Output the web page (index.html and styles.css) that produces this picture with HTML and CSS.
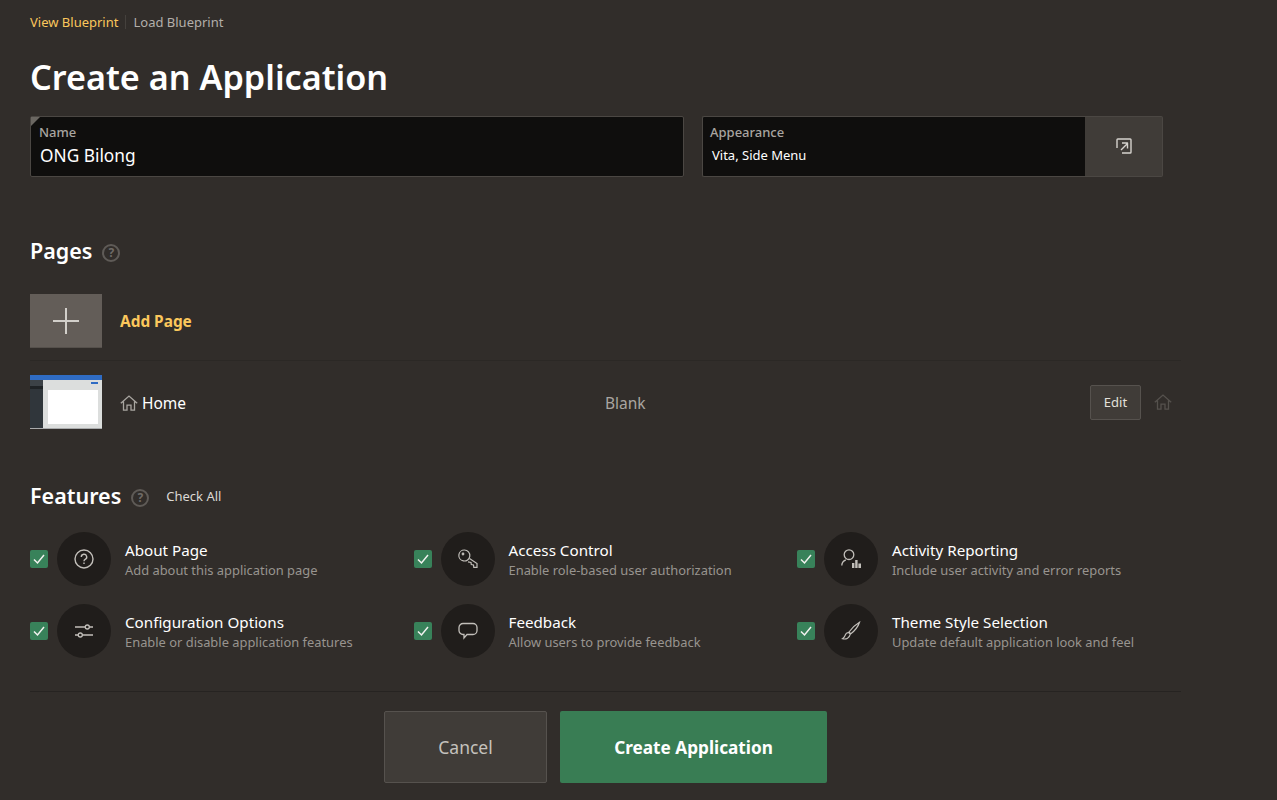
FILE: index.html
```html
<!DOCTYPE html>
<html lang="en">
<head>
<meta charset="utf-8">
<title>Create an Application</title>
<link rel="stylesheet" href="styles.css">
</head>
<body>
<main class="page">
  <nav class="tabs">
    <a class="tab tab-active">View Blueprint</a>
    <a class="tab">Load Blueprint</a>
  </nav>
  <h1 class="title">Create an Application</h1>
  <div class="fields">
    <div class="field field-name">
      <label class="field-label">Name</label>
      <div class="field-value-large">ONG Bilong</div>
    </div>
    <div class="field-group">
      <div class="field field-appearance">
        <label class="field-label">Appearance</label>
        <div class="field-value-small">Vita, Side Menu</div>
      </div>
      <button class="open-btn" aria-label="Open">
        <svg class="icon-open" viewBox="0 0 16 16" fill="none" stroke="currentColor" stroke-width="1.4" stroke-linejoin="round"><path d="M1 10V1.800Q1 1 1.800 1h12.400q.8 0 .8.800v12.400q0 .8-.8.800H6"/><path d="M5 12l6.500-6.500M6 5h5.500v5.500"/></svg>
      </button>
    </div>
  </div>

  <h2 class="section-title section-pages">Pages <span class="help">?</span></h2>

  <div class="page-row add-row">
    <div class="thumb-add">
      <svg viewBox="0 0 28 28" class="icon-plus" fill="none" stroke="currentColor" stroke-width="2"><path d="M14 1v26M1 14h26"/></svg>
    </div>
    <a class="add-page">Add Page</a>
  </div>

  <div class="page-row home-row">
    <div class="thumb">
      <div class="thumb-top"></div>
      <div class="thumb-body">
        <div class="thumb-side"><div class="thumb-side-head"></div><div class="thumb-side-strip"></div></div>
        <div class="thumb-main"><div class="thumb-bar"></div><div class="thumb-card"></div></div>
      </div>
    </div>
    <div class="home-name">
      <svg class="icon-home" viewBox="0 0 18 16" fill="none" stroke="currentColor" stroke-width="1.3"><path d="M.8 8.200L9 1l8.200 7.200M3.500 6.500v8.700h3.500v-5h4v5h3.500V6.500"/></svg>
      <span>Home</span>
    </div>
    <div class="home-type">Blank</div>
    <button class="edit-btn">Edit</button>
    <svg class="icon-home icon-home-dim" viewBox="0 0 18 16" fill="none" stroke="currentColor" stroke-width="1.3"><path d="M.8 8.200L9 1l8.200 7.200M3.500 6.500v8.700h3.500v-5h4v5h3.500V6.500"/></svg>
  </div>

  <div class="features-head">
    <h2 class="section-title">Features <span class="help">?</span></h2>
    <a class="check-all">Check All</a>
  </div>

  <div class="features">
    <div class="feature">
      <span class="check"><svg viewBox="0 0 18 18" fill="none" stroke="currentColor" stroke-width="1.5"><path d="M4 9.500l3.500 3.500L14 5"/></svg></span>
      <span class="circle"><svg viewBox="0 0 20 20" fill="none" stroke="currentColor" stroke-width="1.400"><circle cx="10" cy="10" r="9"/><path d="M7.300 8a2.700 2.700 0 1 1 3.900 2.400c-.9.500-1.200 1-1.200 1.900"/><path d="M10 13.500v1.600"/></svg></span>
      <div class="feature-text"><div class="feature-name">About Page</div><div class="feature-desc">Add about this application page</div></div>
    </div>
    <div class="feature">
      <span class="check"><svg viewBox="0 0 18 18" fill="none" stroke="currentColor" stroke-width="1.5"><path d="M4 9.500l3.500 3.500L14 5"/></svg></span>
      <span class="circle"><svg viewBox="0 0 20 20" fill="none" stroke="currentColor" stroke-width="1.200"><path d="M6.500 1a5.500 5.500 0 1 1-1.200 10.900 5.500 5.500 0 0 1 1.200-10.900z"/><circle cx="5" cy="5" r=".8"/><path d="M11.500 9.500l7.500 5v3.800h-3.200l-.3-2.300-2.200-.5-.3-2-3-.6"/></svg></span>
      <div class="feature-text"><div class="feature-name">Access Control</div><div class="feature-desc">Enable role-based user authorization</div></div>
    </div>
    <div class="feature">
      <span class="check"><svg viewBox="0 0 18 18" fill="none" stroke="currentColor" stroke-width="1.5"><path d="M4 9.500l3.500 3.500L14 5"/></svg></span>
      <span class="circle"><svg viewBox="0 0 20 20" fill="none" stroke="currentColor" stroke-width="1.300"><circle cx="8" cy="5.700" r="4.800"/><path d="M.8 16.500c0-2.800 1.700-4.700 4-5.700"/><path class="bars" d="M11 14h2.400v5H11zM14.200 11h2.400v8h-2.400zM17.400 14.500H20V19h-2.600z"/></svg></span>
      <div class="feature-text"><div class="feature-name">Activity Reporting</div><div class="feature-desc">Include user activity and error reports</div></div>
    </div>
    <div class="feature">
      <span class="check"><svg viewBox="0 0 18 18" fill="none" stroke="currentColor" stroke-width="1.5"><path d="M4 9.500l3.500 3.500L14 5"/></svg></span>
      <span class="circle"><svg viewBox="0 0 20 20" fill="none" stroke="currentColor" stroke-width="1.300"><path d="M1 6h10.500M15 6h4M1 14h3.500M8 14h11"/><circle cx="13.300" cy="6" r="2"/><circle cx="6.300" cy="14" r="2"/></svg></span>
      <div class="feature-text"><div class="feature-name">Configuration Options</div><div class="feature-desc">Enable or disable application features</div></div>
    </div>
    <div class="feature">
      <span class="check"><svg viewBox="0 0 18 18" fill="none" stroke="currentColor" stroke-width="1.5"><path d="M4 9.500l3.500 3.500L14 5"/></svg></span>
      <span class="circle"><svg viewBox="0 0 20 20" fill="none" stroke="currentColor" stroke-width="1.300"><path d="M5 2.500h10a4 4 0 0 1 4 4v3a4 4 0 0 1-4 4H9l-3 3.500v-3.500H5a4 4 0 0 1-4-4v-3a4 4 0 0 1 4-4z"/></svg></span>
      <div class="feature-text"><div class="feature-name">Feedback</div><div class="feature-desc">Allow users to provide feedback</div></div>
    </div>
    <div class="feature">
      <span class="check"><svg viewBox="0 0 18 18" fill="none" stroke="currentColor" stroke-width="1.5"><path d="M4 9.500l3.500 3.500L14 5"/></svg></span>
      <span class="circle"><svg viewBox="0 0 20 20" fill="none" stroke="currentColor" stroke-width="1.200"><path d="M18.500 1.200C14.500 3.500 10.500 7.500 8 11l1.800 1.800C13.300 10 17 6 18.500 1.200z"/><path d="M7.700 11.500c-2 .2-3.200 1.300-3.700 3.200-.3 1.200-1.300 2.200-2.500 3 3.200.8 6.800 0 7.800-4.500z"/></svg></span>
      <div class="feature-text"><div class="feature-name">Theme Style Selection</div><div class="feature-desc">Update default application look and feel</div></div>
    </div>
  </div>

  <footer class="actions">
    <button class="btn btn-cancel">Cancel</button>
    <button class="btn btn-create">Create Application</button>
  </footer>
</main>
</body>
</html>
```
FILE: styles.css
```css
* { box-sizing: border-box; }
html, body { margin: 0; padding: 0; height: 800px; overflow: hidden; }
body {
  background: #312d2a;
  color: #fff;
  font-family: "Noto Sans", "Open Sans", sans-serif;
}
.page { width: 1181px; padding: 0 0 0 30px; }
.tabs { display: flex; align-items: center; height: 14px; margin-top: 15px; font-size: 13px; }
.tab { color: #b3afaa; line-height: 14px; }
.tab-active { color: #fbc75c; padding-right: 7px; border-right: 1px solid #45413d; margin-right: 7px; }
.title { margin: 26px 0 0; font-size: 34.200px; line-height: 44px; font-weight: 600; height: 44px; }
.fields { display: flex; margin-top: 17px; gap: 18px; width: 1133px; }
.field { background: #0f0e0d; border: 1px solid #4b4743; height: 61px; position: relative; border-radius: 2px; padding: 7px 8px 0; }
.field-name { width: 654px; }
.field-name::before { content: ""; position: absolute; left: 0; top: 0; border-top: 9px solid #6b6762; border-right: 9px solid transparent; }
.field-label { display: block; font-size: 13px; line-height: 16px; color: #a9a5a0; font-weight: 500; }
.field-value-large { font-size: 17.300px; line-height: 24px; margin: 4px 0 0 1px; color: #fff; }
.field-value-small { font-size: 13px; line-height: 18px; margin: 6px 0 0 1px; color: #fff; }
.field-group { display: flex; flex: 0 0 461px; width: 461px; }
.field-appearance { flex: 1; border-right: 0; border-radius: 2px 0 0 2px; padding-left: 7px; }
.field-appearance .field-value-small { margin-left: 2px; }
.open-btn { width: 78px; height: 61px; background: #403c38; border: 1px solid #4b4743; border-left: 0; border-radius: 0 2px 2px 0; color: #d5d2cd; display: flex; align-items: center; justify-content: center; padding: 0; }
.icon-open { width: 16px; height: 16px; margin-top: -2px; }
.section-title { margin: 0; font-size: 21.500px; line-height: 30px; font-weight: 600; display: flex; align-items: center; gap: 10px; }
.section-pages { margin-top: 59px; }
.help { width: 18px; height: 18px; border: 2px solid #5f5b57; border-radius: 50%; color: #6f6b67; font-size: 12px; line-height: 14px; font-weight: 700; text-align: center; margin-top: 3px; }
.page-row { display: flex; align-items: center; }
.add-row { margin-top: 28px; height: 67px; border-bottom: 1px solid #2b2825; align-items: flex-start; }
.thumb-add { width: 72px; height: 54px; background: #635d58; border-bottom: 1px solid #55504b; display: flex; align-items: center; justify-content: center; color: #d2cfca; }
.icon-plus { width: 28px; height: 28px; }
.add-page { color: #fbc75c; font-size: 15.400px; font-weight: 700; margin-left: 18px; line-height: 56px; }
.home-row { margin-top: 14px; height: 54px; }
.thumb { width: 72px; height: 54px; background: #d5d6d6; display: flex; flex-direction: column; border-bottom: 1px solid #a9abac; }
.thumb-top { height: 5px; background: #2f6cc4; }
.thumb-body { display: flex; flex: 1; }
.thumb-side { width: 13px; background: #30363b; }
.thumb-side-head { height: 6px; background: #3c4247; }
.thumb-side-strip { height: 3px; background: #1f2326; }
.thumb-main { flex: 1; background: #dcdedd; padding: 2px 4px 4px; display: flex; flex-direction: column; align-items: flex-end; }
.thumb-bar { width: 7px; height: 2px; background: #2f6cc4; }
.thumb-card { width: 50px; flex: 1; margin-top: 6px; background: #fff; }
.home-name { display: flex; align-items: center; gap: 4px; margin-left: 18px; font-size: 15.500px; width: 485px; padding-top: 1px; }
.icon-home { width: 18px; height: 16px; color: #a8a5a0; flex: none; }
.home-type { font-size: 15.500px; color: #a9a5a0; width: 485px; padding-top: 1px; }
.edit-btn { width: 51px; height: 35px; background: #403c38; border: 1px solid #56524e; border-radius: 2px; color: #e3e0db; font: 13px "Noto Sans", sans-serif; padding: 0; }
.icon-home-dim { color: #55514d; margin-left: 13px; }
.features-head { display: flex; align-items: center; gap: 17px; margin-top: 52px; height: 30px; }
.check-all { font-size: 13px; color: #dcd9d4; }
.features { display: grid; grid-template-columns: 383.500px 383.500px 1fr; row-gap: 18px; margin-top: 21px; }
.feature { display: flex; align-items: center; height: 54px; }
.check { width: 18px; height: 18px; border-radius: 2px; background: #38825a; color: #f2f2f0; flex: none; display: flex; }
.check svg { width: 18px; height: 18px; }
.circle { width: 54px; height: 54px; margin-left: 9px; border-radius: 50%; background: #201d1b; color: #c2bfba; flex: none; display: flex; align-items: center; justify-content: center; }
.circle svg { width: 20px; height: 20px; }
.bars { fill: currentColor; stroke: none; }
.feature-text { margin-left: 14px; padding-top: 2px; }
.feature-name { font-size: 15.200px; line-height: 19px; margin-bottom: 1px; color: #fff; }
.feature-desc { font-size: 12.900px; line-height: 18px; color: #98948f; }
.actions { display: flex; justify-content: center; gap: 13px; margin-top: 33px; padding-top: 19px; border-top: 1px solid #262321; width: 1151px; }
.btn { height: 72px; border-radius: 2px; font: 17.500px "Noto Sans", sans-serif; padding: 0; }
.btn-cancel { width: 163px; background: #403c38; border: 1px solid #56524e; color: #c5c2bd; }
.btn-create { width: 267px; background: #397d54; border: 0; color: #fff; font-weight: 700; font-size: 17.200px; }
```
